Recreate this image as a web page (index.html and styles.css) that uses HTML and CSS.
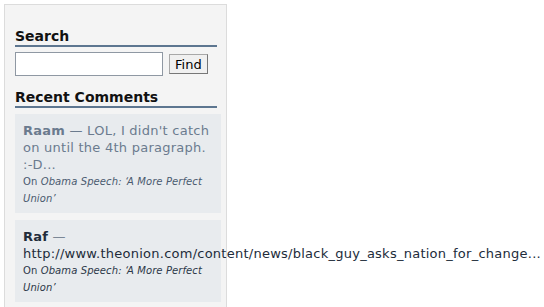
FILE: index.html
```html
<!DOCTYPE html>
<html lang="en">
<head>
    <meta charset="UTF-8">
    <title>Sidebar</title>
    <link rel="stylesheet" href="styles.css">
</head>
<body>
    <div class="sidebar">
        <h2>Search</h2>
        <form class="search-form">
            <input type="text" class="search-input">
            <button type="button" class="search-button">Find</button>
        </form>

        <h2>Recent Comments</h2>
        <ul class="comments">
            <li class="comment faded">
                <div class="comment-body"><strong>Raam</strong> &mdash; LOL, I didn't catch on until the 4th paragraph. <span class="nowrap">:-D...</span></div>
                <div class="comment-meta">On <em>Obama Speech: &lsquo;A More Perfect Union&rsquo;</em></div>
            </li>
            <li class="comment">
                <div class="comment-body"><strong>Raf</strong> <span class="dash">&mdash;</span> http://www.theonion.com/content/news/black_guy_asks_nation_for_change...</div>
                <div class="comment-meta">On <em>Obama Speech: &lsquo;A More Perfect Union&rsquo;</em></div>
            </li>
        </ul>
    </div>
</body>
</html>
```

FILE: styles.css
```css
body {
    margin: 0;
    background: #fff;
    font-family: 'DejaVu Sans', Verdana, sans-serif;
    color: #111;
}

.sidebar {
    margin: 4px 0 0 4px;
    width: 206px;
    min-height: 320px;
    padding: 23px 5px 0 10px;
    background: #f4f4f4;
    border: 1px solid #dcdcdc;
}

h2 {
    margin: 0 4px 0 0;
    padding-bottom: 1px;
    font-size: 14px;
    line-height: 16px;
    font-weight: bold;
    color: #111;
    border-bottom: 2px solid #5d7690;
}

.search-form {
    display: flex;
    align-items: center;
    gap: 6px;
    margin: 5px 0 13px;
}

.search-input {
    width: 144px;
    height: 20px;
    margin: 0;
    padding: 1px;
    border: 1px solid #8f98a3;
    background: #fff;
}

.search-button {
    height: 20px;
    margin: 0;
    padding: 0 5px;
    font-family: 'DejaVu Sans', Verdana, sans-serif;
    font-size: 13px;
    color: #000;
    background: #f0f0f0;
    border: 1px solid #a8a8a8;
    border-right-color: #777;
    border-bottom-color: #777;
}

.comments {
    list-style: none;
    margin: 6px 0 0;
    padding: 0;
}

.comment {
    background: #e8ebee;
    padding: 8px 8px 6px;
    margin-bottom: 7px;
}

.comment-body {
    font-size: 13px;
    line-height: 17px;
    letter-spacing: 0.25px;
    color: #222c3a;
}

.nowrap {
    white-space: nowrap;
}

.faded .comment-body {
    color: #6b7b8e;
}

.dash {
    color: #7b8796;
}

.comment-meta {
    font-size: 10px;
    line-height: 17px;
    color: #2c3848;
    letter-spacing: 0.1px;
}

.faded .comment-meta {
    color: #4a5a6e;
}
```
